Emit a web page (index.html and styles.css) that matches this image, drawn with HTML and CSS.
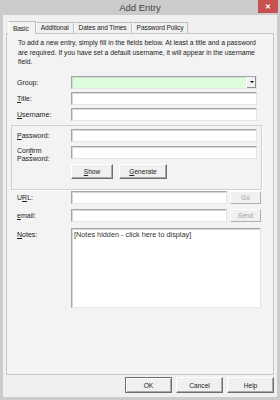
FILE: index.html
```html
<!DOCTYPE html>
<html lang="en">
<head>
  <meta charset="UTF-8" />
  <title>Add Entry</title>
  <link rel="stylesheet" href="styles.css">
</head>
<body>
  <div class="window">
    <div class="titlebar">
      <span class="title">Add Entry</span>
      <span class="close">&#x2715;</span>
    </div>

    <div class="client">
      <!-- Tabs -->
      <div class="tabs">
        <span class="tab active">Basic</span>
        <span class="tab">Additional</span>
        <span class="tab">Dates and Times</span>
        <span class="tab">Password Policy</span>
      </div>

      <div class="panel">
        <p class="intro">To add a new entry, simply fill in the fields below. At least a title and a password are required. If you have set a default username, it will appear in the username field.</p>

        <div class="row first">
          <label>Group:</label>
          <div class="combo"><span class="drop"></span></div>
        </div>
        <div class="row">
          <label><u>T</u>itle:</label>
          <div class="field"></div>
        </div>
        <div class="row">
          <label><u>U</u>sername:</label>
          <div class="field"></div>
        </div>

        <!-- Password group -->
        <div class="groupbox">
          <div class="row">
            <label><u>P</u>assword:</label>
            <div class="field"></div>
          </div>
          <div class="row">
            <label class="two">Con<u>f</u>irm<br>Password:</label>
            <div class="field"></div>
          </div>
          <div class="btnrow">
            <span class="btn small"><u>S</u>how</span>
            <span class="btn wide"><u>G</u>enerate</span>
          </div>
        </div>

        <div class="row url">
          <label>U<u>R</u>L:</label>
          <div class="field short"></div>
          <span class="btn side disabled">Go</span>
        </div>
        <div class="row email">
          <label><u>e</u>mail:</label>
          <div class="field short"></div>
          <span class="btn side disabled">Send</span>
        </div>
        <div class="row notes">
          <label><u>N</u>otes:</label>
          <div class="field area">[Notes hidden - click here to display]</div>
        </div>
      </div>

      <div class="footer">
        <span class="btn dlg default">OK</span>
        <span class="btn dlg">Cancel</span>
        <span class="btn dlg">Help</span>
      </div>
    </div>
  </div>
</body>
</html>
```

FILE: styles.css
```css
*, *::before, *::after {
  box-sizing: border-box;
}
body {
  margin: 0;
  font-family: 'Liberation Sans', Arial, sans-serif;
  font-size: 7px;
  color: #222;
}

.window {
  width: 280px;
  height: 400px;
  background: #cbcbcb;
  padding: 0 3px 3px 3px;
  display: flex;
  flex-direction: column;
}

.titlebar {
  height: 15px;
  display: flex;
  align-items: center;
  justify-content: center;
  position: relative;
}
.title {
  font-size: 9.5px;
  color: #444;
  margin-top: -1px;
}
.close {
  position: absolute;
  right: -1px;
  top: 0;
  width: 20px;
  height: 13px;
  background: #c75050;
  color: #fff;
  font-size: 7px;
  font-weight: bold;
  display: flex;
  align-items: center;
  justify-content: center;
}

.client {
  flex: 1;
  background: #f0f0f0;
  padding: 5px 3px 0 3px;
  display: flex;
  flex-direction: column;
}

/* tabs */
.tabs {
  display: flex;
  height: 13px;
  padding-left: 2px;
  align-items: flex-end;
}
.tab {
  height: 11px;
  padding: 0 4px;
  border: 1px solid #bdbdbd;
  border-bottom: none;
  border-left-color: #fff;
  background: #f0f0f0;
  line-height: 10px;
  font-size: 6.6px;
  letter-spacing: -0.1px;
}
.tab.active {
  height: 13px;
  padding: 0 6px 0 4px;
  background: #f3f3f3;
  line-height: 13px;
  position: relative;
  top: 1px;
}

.panel {
  height: 342px;
  border: 1px solid #c6c6c6;
  background: #f3f3f3;
  padding: 0 12px 0 4px;
}

.intro {
  margin: 4px 0 0 7px;
  font-size: 6.8px;
  line-height: 9.5px;
  width: 240px;
}

.row {
  display: flex;
  align-items: center;
  height: 13px;
  margin-top: 3px;
  padding-left: 6px;
}
.row.first {
  margin-top: 9px;
}
.row label {
  width: 54px;
  flex: none;
}
.row label.two {
  line-height: 8px;
  padding-top: 5px;
}

.field,
.combo {
  width: 186px;
  height: 13px;
  background: #fff;
  border: 1px solid;
  border-color: #a5a5a5 #e6e6e6 #e6e6e6 #a5a5a5;
  box-shadow: inset 1px 1px 0 #d8d8d8;
}
.combo {
  background: #dcfcdc;
  position: relative;
}
.drop {
  position: absolute;
  right: 0;
  top: 0;
  width: 10px;
  height: 11px;
  background: #f0f0f0;
  border-left: 1px solid #fff;
  box-shadow: inset -1px -1px 0 #8c8c8c;
}
.drop::after {
  content: '';
  position: absolute;
  left: 3px;
  top: 4px;
  border-left: 2px solid transparent;
  border-right: 2px solid transparent;
  border-top: 2px solid #000;
}

.groupbox {
  margin: 4px 0 0 0;
  height: 65px;
  width: 251px;
  border: 1px solid #d0d0d0;
  box-shadow: 1px 1px 0 #fff;
  padding-top: 3px;
}
.groupbox .row {
  padding-left: 5px;
  margin-top: 4px;
}
.groupbox .row:first-child {
  margin-top: 0;
}
.btnrow {
  display: flex;
  gap: 6px;
  margin: 5px 0 0 59px;
}

.btn {
  display: flex;
  align-items: center;
  justify-content: center;
  height: 15px;
  background: #f0f0f0;
  border: 1px solid;
  border-color: #fff #6f6f6f #6f6f6f #fff;
  box-shadow: inset -1px -1px 0 #a8a8a8;
  font-size: 6.6px;
}
.btn.small {
  width: 42px;
}
.btn.wide {
  width: 48px;
}
.btn.side {
  width: 31px;
  height: 13px;
  margin-left: 3px;
}
.btn.disabled {
  color: #a3a3a3;
  border-color: #fff #b0b0b0 #b0b0b0 #fff;
  box-shadow: none;
}

.row.url {
  margin-top: 1px;
}
.row.email {
  margin-top: 5px;
}
.field.short {
  width: 156px;
}
.row.notes {
  height: 80px;
  align-items: flex-start;
  margin-top: 6px;
}
.row.notes label {
  padding-top: 3px;
}
.field.area {
  width: 190px;
  height: 80px;
  font-size: 7.3px;
  padding: 1px 2px;
  color: #333;
}

.footer {
  display: flex;
  justify-content: flex-end;
  gap: 4px;
  padding: 2px 0 0 0;
}
.btn.dlg {
  width: 47px;
  height: 16px;
}
.btn.default {
  border-color: #6f6f6f;
  box-shadow: inset 1px 1px 0 #fff, inset -1px -1px 0 #a8a8a8;
}
```
